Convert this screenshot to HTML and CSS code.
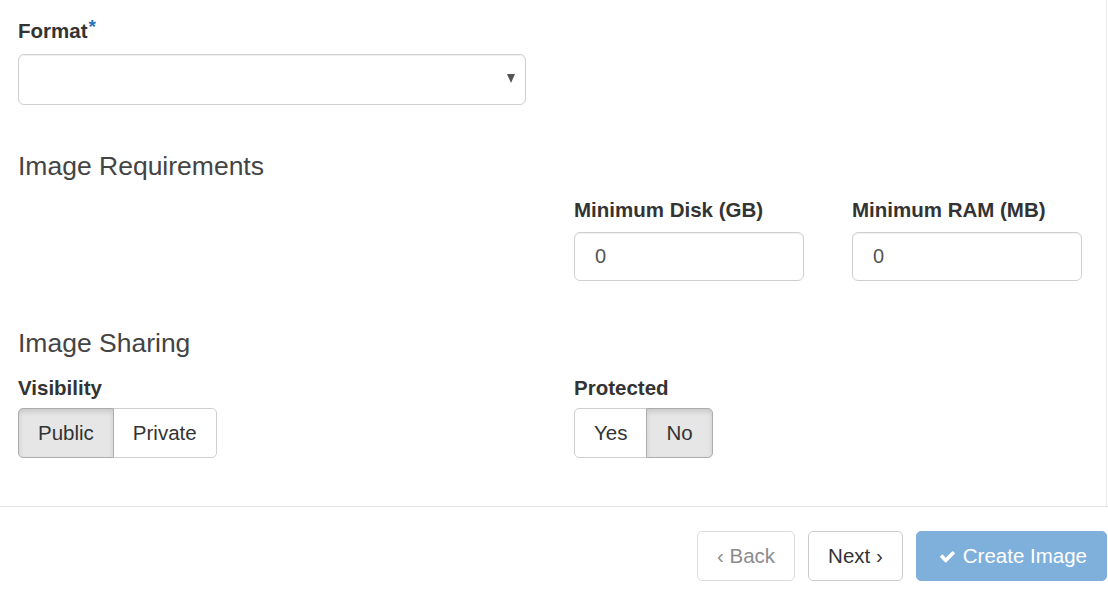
FILE: index.html
```html
<!DOCTYPE html>
<html lang="en">
<head>
<meta charset="utf-8">
<title>Create Image</title>
<link rel="stylesheet" href="styles.css">
</head>
<body>
<div class="modal-body">
  <div class="row">
    <div class="field">
      <label class="lbl lbl-format">Format<span class="req">*</span></label>
      <div class="select"><span class="caret"></span></div>
    </div>
  </div>

  <h4 class="sec sec-req">Image Requirements</h4>
  <div class="row">
    <div></div>
    <div class="row inner">
      <div class="field">
        <label class="lbl">Minimum Disk (GB)</label>
        <div class="input">0</div>
      </div>
      <div class="field">
        <label class="lbl">Minimum RAM (MB)</label>
        <div class="input">0</div>
      </div>
    </div>
  </div>

  <h4 class="sec sec-share">Image Sharing</h4>
  <div class="row">
    <div class="field">
      <label class="lbl lbl-group">Visibility</label>
      <div class="btn-group">
        <span class="tog active">Public</span><span class="tog">Private</span>
      </div>
    </div>
    <div class="field">
      <label class="lbl lbl-group">Protected</label>
      <div class="btn-group">
        <span class="tog">Yes</span><span class="tog active">No</span>
      </div>
    </div>
  </div>
</div>
<div class="modal-footer">
  <span class="btn btn-default disabled">&lsaquo; Back</span>
  <span class="btn btn-default">Next &rsaquo;</span>
  <span class="btn btn-primary disabled">
    <svg class="check" viewBox="0 0 1792 1792" width="19" height="17" aria-hidden="true"><path fill="#fff" d="M1671 566q0 40-28 68l-724 724-136 136q-28 28-68 28t-68-28l-136-136-362-362q-28-28-28-68t28-68l136-136q28-28 68-28t68 28l294 295 656-657q28-28 68-28t68 28l136 136q28 28 28 68z"/></svg>
    Create Image
  </span>
</div>
</body>
</html>
```

FILE: styles.css
```css
* { box-sizing: border-box; }

html, body {
  margin: 0;
  padding: 0;
  background: #fff;
}

body {
  font-family: "Liberation Sans", Arial, Helvetica, sans-serif;
  font-size: 20px;
  color: #333;
  width: 1108px;
  height: 590px;
  overflow: hidden;
}

.modal-body {
  margin-right: 1px;
  border-right: 1px solid #ececec;
  padding: 17px 24px 48px 18px;
}

.row {
  display: grid;
  grid-template-columns: 1fr 1fr;
  column-gap: 48px;
}

.field {
  display: flex;
  flex-direction: column;
}

.lbl {
  display: block;
  font-weight: bold;
  font-size: 20.5px;
  line-height: 28px;
  margin-bottom: 8px;
  color: #333;
}

.lbl-format { margin-bottom: 9px; }
.lbl-group { margin-bottom: 6px; }

.req {
  color: #2a73bb;
  font-size: 19px;
  vertical-align: 5px;
  line-height: 0;
  margin-left: 1px;
}

.select {
  height: 51px;
  border: 1px solid #cfcfcf;
  border-radius: 6px;
  box-shadow: inset 0 1px 1px rgba(0,0,0,0.06);
  display: flex;
  justify-content: flex-end;
  align-items: center;
  padding-right: 10px;
}

.caret {
  width: 0;
  height: 0;
  border-top: 9px solid #555;
  border-left: 4.5px solid transparent;
  border-right: 4.5px solid transparent;
  margin-top: -3px;
}

.sec {
  margin: 0;
  font-weight: normal;
  font-size: 26.5px;
  line-height: 29px;
  color: #444;
}

.sec-req { margin-top: 47px; margin-bottom: 15px; }
.sec-share { margin-top: 48px; margin-bottom: 16px; }

.input {
  height: 49px;
  border: 1px solid #cfcfcf;
  border-radius: 6px;
  box-shadow: inset 0 1px 1px rgba(0,0,0,0.06);
  padding: 0 20px;
  display: flex;
  align-items: center;
  color: #555;
}

.btn-group {
  display: flex;
}

.tog {
  height: 50px;
  display: flex;
  align-items: center;
  padding: 0 19px;
  font-size: 20.5px;
  border: 1px solid #cfcfcf;
  background: #fff;
  color: #333;
}

.tog + .tog { margin-left: -1px; }

.tog:first-child { border-radius: 5px 0 0 5px; }
.tog:last-child { border-radius: 0 5px 5px 0; }

.tog.active {
  background: #e6e6e6;
  border-color: #adadad;
  box-shadow: inset 0 3px 5px rgba(0,0,0,0.125);
  position: relative;
  z-index: 1;
}

.modal-footer {
  border-top: 1px solid #e3e3e3;
  display: flex;
  justify-content: flex-end;
  gap: 13px;
  padding: 24px 1px 0 0;
}

.btn {
  height: 50px;
  display: inline-flex;
  align-items: center;
  padding: 0 19px;
  font-size: 20.5px;
  border: 1px solid #ccc;
  border-radius: 5px;
  background: #fff;
  color: #333;
  white-space: nowrap;
}

.btn-default.disabled {
  color: #8c8c8c;
  border-color: #dcdcdc;
}

.btn-primary {
  background: #7fb0dc;
  border-color: #7fb0dc;
  color: #fff;
  padding: 0 19px 0 21px;
}

.check {
  margin-right: 6px;
}
```
